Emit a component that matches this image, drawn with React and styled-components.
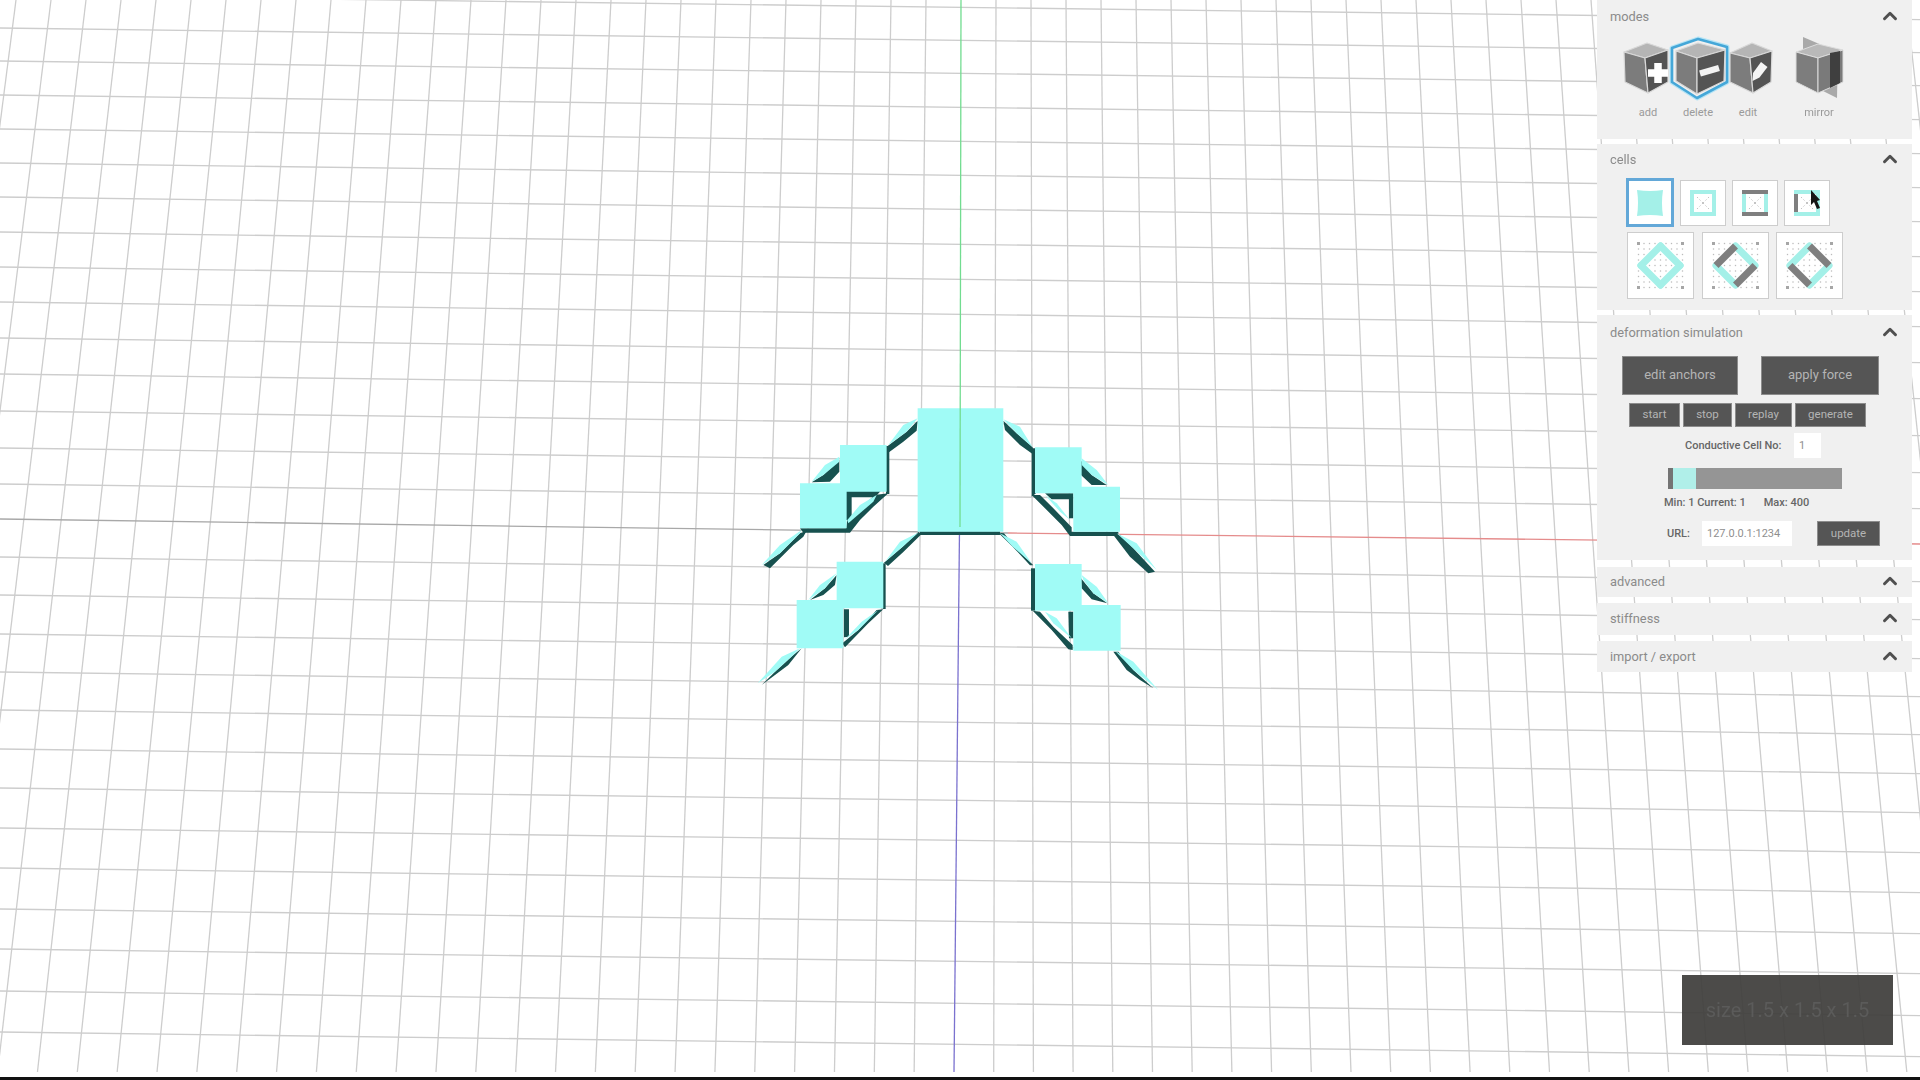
import React from "react";
import styled, { createGlobalStyle } from "styled-components";
import { ChevronUp } from "lucide-react";

const AQUA = "#a0fbf6";
const DARK = "#17514f";
const GREY = "#7f7f7f";
const TINT = "#a4f0e8";

const GlobalStyle = createGlobalStyle`
    html, body {
        margin: 0;
        padding: 0;
        background: #fff;
    }
    body {
        font-family: Roboto, "Liberation Sans", sans-serif;
        overflow: hidden;
    }
`;

const Stage = styled.div`
    position: relative;
    width: 1920px;
    height: 1080px;
    display: flex;
    flex-direction: column;
    overflow: hidden;
    background: #fff;
`;

const Viewport = styled.svg`
    display: block;
    flex: 1;
    width: 1920px;
    filter: blur(0.5px);
`;

const BottomBar = styled.div`
    height: 3px;
    background: #121212;
`;

const Panel = styled.div`
    position: absolute;
    top: 0;
    left: 1597px;
    width: 315px;
    display: flex;
    flex-direction: column;
    gap: 5px;
    filter: blur(0.45px);
`;

const Section = styled.section`
    background: #f0f0f0;
    margin-top: ${(p) => p.$top || 0}px;
    padding-bottom: ${(p) => p.$pad || 0}px;
`;

const Header = styled.header`
    display: flex;
    align-items: center;
    justify-content: space-between;
    height: ${(p) => p.$height || 30}px;
    padding: 0 11px 0 13px;
    font-size: 12.8px;
    color: #8b8b8b;
`;

const Chevron = styled(ChevronUp)`
    color: #4f4f4f;
`;

const ModeRow = styled.div`
    display: flex;
    margin: 6px 0 0 26px;
`;

const ModeItem = styled.div`
    display: flex;
    flex-direction: column;
    align-items: center;
    width: 50px;
    margin-left: ${(p) => p.$gap || 0}px;
    font-size: 11px;
    line-height: 14px;
    color: #9a9a9a;
`;

const ModeIcon = styled.svg`
    display: block;
    overflow: visible;
    margin-bottom: 8px;
`;

const CellRow = styled.div`
    display: flex;
    align-items: center;
    gap: ${(p) => p.$gap}px;
    margin: ${(p) => p.$top}px 0 0 ${(p) => p.$left}px;
`;

const CellBox = styled.div`
    position: relative;
    flex: none;
    box-sizing: border-box;
    width: ${(p) => (p.$selected ? 48 : p.$size)}px;
    height: ${(p) => (p.$selected ? 49 : p.$size)}px;
    display: flex;
    align-items: center;
    justify-content: center;
    background: #fff;
    border: ${(p) => (p.$selected ? "3px solid #63a8d8" : "1px solid #cdcdcd")};
`;

const Pointer = styled.svg`
    position: absolute;
    top: 9px;
    left: 26px;
`;

const ButtonRow = styled.div`
    display: flex;
    gap: ${(p) => p.$gap}px;
    margin: ${(p) => p.$top}px 0 0 ${(p) => p.$left}px;
`;

const DarkButton = styled.button`
    box-sizing: border-box;
    width: ${(p) => p.$width}px;
    height: ${(p) => p.$height}px;
    padding: 0 0 2px;
    border: 1px solid #8c8c8c;
    background: #555;
    color: #b4b4b4;
    font-family: inherit;
    font-size: ${(p) => p.$font}px;
`;

const FieldRow = styled.div`
    display: flex;
    align-items: center;
    margin: ${(p) => p.$top}px 0 0 ${(p) => p.$left}px;
`;

const FieldLabel = styled.label`
    width: ${(p) => p.$width}px;
    font-size: 11px;
    font-weight: 500;
    color: #666;
    white-space: nowrap;
`;

const TextInput = styled.input`
    box-sizing: border-box;
    width: ${(p) => p.$width}px;
    height: 25px;
    padding: 0 0 0 5px;
    border: 0;
    outline: 0;
    background: #fff;
    color: #8f8f8f;
    font-family: inherit;
    font-size: 11px;
`;

const Slider = styled.div`
    display: flex;
    width: 174px;
    height: 21px;
    margin: 10px 0 0 71px;
    background: #959595;
`;

const SliderStart = styled.div`
    width: 5px;
    background: #747474;
`;

const SliderThumb = styled.div`
    width: 23px;
    background: #b0efe9;
`;

const RangeRow = styled.div`
    display: flex;
    gap: 18px;
    margin: 7px 0 0 67px;
    font-size: 11px;
    font-weight: 500;
    line-height: 14px;
    color: #666;
`;

const SizeBadge = styled.div`
    position: absolute;
    left: 1682px;
    top: 975px;
    width: 211px;
    height: 70px;
    display: flex;
    align-items: center;
    justify-content: center;
    background: rgba(62, 61, 59, 0.93);
    color: #5b5b5a;
    font-size: 20px;
    filter: blur(0.5px);
`;

// grid lines, measured from the reference
const ROWS = [-5, 28, 61, 95, 129, 163, 197, 232, 267, 302, 338, 374, 411, 448, 484, 557, 595, 634, 672, 710, 749, 788, 828, 868, 909, 949, 991, 1032];
const COLS = Array.from({ length: 60 }, (_, i) => i - 29).filter((k) => k !== 0);

function Grid() {
    return (
        <g stroke="#cdcdcd" strokeWidth="1.3">
            {ROWS.map((y) => (
                <line key={y} x1="0" y1={y} x2="1920" y2={y + 24.6} />
            ))}
            {COLS.map((k) => (
                <line key={k} x1={961 + 35 * k} y1="0" x2={954 + (k < 0 ? 39.85 : 39.7) * k} y2="1072" />
            ))}
        </g>
    );
}

function Axes() {
    return (
        <g strokeWidth="1.3">
            <line x1="0" y1="519" x2="1008" y2="533" stroke="#a8a8a8" />
            <line x1="1008" y1="533" x2="1920" y2="544" stroke="#e58c8c" />
            <line x1="959.5" y1="530" x2="954" y2="1072" stroke="#7b72cf" />
        </g>
    );
}

// each group is traced at 3x from a crop whose corner is at x, y
const STRUCTURE = [
    {
        x: 740,
        y: 390,
        dark: [
            "540,424 780,424 780,435 540,435",
            "533,92 530,122 490,155 447,187 440,170 500,125",
            "790,92 830,130 878,172 882,195 840,165 795,120",
            "535,426 545,432 490,486 444,528 432,518 488,470",
            "775,428 792,430 834,480 880,526 870,526 818,470",
        ],
        aqua: [
            "533,55 790,55 790,425 533,425",
            "533,85 490,105 445,165 500,125",
            "790,88 840,110 878,172 830,130",
            "535,428 480,455 435,515 488,470",
            "780,430 830,455 875,520 818,470",
        ],
    },
    {
        x: 760,
        y: 440,
        dark: [
            "238,60 238,95 210,125 155,127 190,105",
            "378,18 388,18 388,162 378,162",
            "258,153 362,153 345,172 275,172 275,240 258,240",
            "385,160 340,200 300,240 270,278 130,278 120,265 258,265 262,240 300,205 345,165",
            "140,272 130,290 100,315 30,385 10,375 60,340 120,280",
        ],
        aqua: [
            "240,15 380,15 380,155 260,155 260,265 120,265 120,130 240,130",
            "238,50 195,75 155,125 190,105 238,65",
            "350,165 300,195 262,240 265,250 340,185",
            "125,270 60,315 5,375 60,340 120,280",
        ],
    },
    {
        x: 1020,
        y: 440,
        dark: [
            "35,25 48,25 48,160 35,170",
            "183,62 183,105 215,135 260,135 215,105",
            "75,160 160,160 160,235 147,235 147,178 95,178",
            "35,165 60,165 100,205 155,262 155,275 295,275 295,288 150,288 125,255 75,205",
            "280,285 300,285 340,325 405,395 385,400 330,350",
        ],
        aqua: [
            "45,22 185,22 185,140 300,140 300,275 160,275 160,160 45,160",
            "185,55 230,90 265,135 215,105 185,75",
            "75,165 110,190 150,240 120,215",
            "290,280 350,310 410,390 340,325",
        ],
    },
    {
        x: 755,
        y: 560,
        dark: [
            "245,45 240,75 205,105 165,120 210,85",
            "383,10 392,10 392,147 383,147",
            "267,148 282,148 282,230 267,232",
            "385,148 340,190 270,262 262,250 310,210 365,150",
            "140,265 100,315 20,375 60,335 115,285",
        ],
        aqua: [
            "245,5 385,5 385,145 265,145 265,265 125,265 125,120 245,120",
            "245,40 195,75 160,120 210,85",
            "370,150 320,185 268,240 310,210",
            "135,265 80,290 8,370 60,335 115,285",
        ],
    },
    {
        x: 1020,
        y: 560,
        dark: [
            "33,25 47,25 47,152 33,152",
            "183,55 185,85 215,118 262,130 220,100",
            "145,155 160,155 160,235 147,235",
            "38,152 60,155 100,200 158,255 158,270 145,268 95,210",
            "280,275 295,275 340,330 400,385 360,360 320,330",
        ],
        aqua: [
            "45,12 185,12 185,135 302,135 302,272 160,272 160,152 45,152",
            "185,45 230,80 265,130 220,100 190,60",
            "75,155 110,175 155,235 100,190",
            "285,272 340,305 415,390 340,330",
        ],
    },
];

function Structure() {
    return (
        <g>
            {STRUCTURE.map((group) => (
                <g key={`${group.x}-${group.y}`} transform={`translate(${group.x} ${group.y}) scale(0.3333)`}>
                    {group.dark.map((points) => (
                        <polygon key={points} points={points} fill={DARK} />
                    ))}
                    {group.aqua.map((points) => (
                        <polygon key={points} points={points} fill={AQUA} />
                    ))}
                </g>
            ))}
        </g>
    );
}

function Cube({ lt, top, rt, rb, bot, lb, mid }) {
    const pts = (...list) => list.map((p) => p.join(",")).join(" ");
    return (
        <g stroke="#d8d8d8" strokeWidth="1.2" strokeLinejoin="round">
            <polygon points={pts(lt, top, rt, mid)} fill="#b5b5b5" />
            <polygon points={pts(lt, mid, bot, lb)} fill="#7c7c7c" />
            <polygon points={pts(mid, rt, rb, bot)} fill="#545454" />
        </g>
    );
}

function AddIcon() {
    return (
        <ModeIcon width="50" height="60" viewBox="0 0 50 60">
            <Cube lt={[1, 14]} top={[24, 5]} rt={[45, 12]} rb={[45, 44]} bot={[25, 55]} lb={[2, 44]} mid={[22, 20]} />
            <path d="M35 25v20M25 35h20" stroke="#fff" strokeWidth="7.5" />
        </ModeIcon>
    );
}

function DeleteIcon() {
    return (
        <ModeIcon width="50" height="60" viewBox="0 0 50 60">
            <polygon points="25,1 -1,10 -1,44 24,60 54,44 54,9" fill="none" stroke="#b5e4f5" strokeWidth="5" strokeLinejoin="round" />
            <polygon points="25,1 -1,10 -1,44 24,60 54,44 54,9" fill="#f0f0f0" stroke="#45a7d8" strokeWidth="2.6" strokeLinejoin="round" />
            <Cube lt={[3, 13]} top={[25, 5]} rt={[52, 12]} rb={[51, 43]} bot={[24, 56]} lb={[3, 43]} mid={[24, 20]} />
            <path d="M27 35.500l19-5.500" stroke="#f2f2f2" strokeWidth="6.5" />
        </ModeIcon>
    );
}

function EditIcon() {
    return (
        <ModeIcon width="50" height="60" viewBox="0 0 50 60">
            <Cube lt={[7, 15]} top={[29, 5]} rt={[49, 13]} rb={[48, 44]} bot={[30, 55]} lb={[7, 44]} mid={[27, 20]} />
            <polygon points="38,24 44.500,29 36.500,39.500 29.500,43 30,35" fill="#f5f5f5" />
        </ModeIcon>
    );
}

function MirrorIcon() {
    return (
        <ModeIcon width="50" height="60" viewBox="0 0 50 60">
            <polygon points="9,-1 44,14 43,60 9,43" fill="#a9a9a9" />
            <polygon points="2,14 24,6 49,12 24,20" fill="#b9b9b9" stroke="#ddd" strokeWidth="1" />
            <polygon points="2,14 24,20 24,55 2,44" fill="#7d7d7d" stroke="#ddd" strokeWidth="1" />
            <polygon points="24,20 49,12 49,44 24,55" fill="#7a7a7a" stroke="#ddd" strokeWidth="1" />
            <polygon points="36,15 46,13 46,45 36,50" fill="#3f3f3f" />
        </ModeIcon>
    );
}

function DotGrid({ center, reach, steps }) {
    const marks = [];
    const step = (reach * 2) / steps;
    for (let i = 0; i <= steps; i++) {
        for (let j = 0; j <= steps; j++) {
            const corner = (i === 0 || i === steps) && (j === 0 || j === steps);
            const size = corner ? 3 : 1.3;
            marks.push(
                <rect
                    key={`${i}-${j}`}
                    x={center - reach + i * step - size / 2}
                    y={center - reach + j * step - size / 2}
                    width={size}
                    height={size}
                    fill={corner ? "#a6a6a6" : "#bcbcbc"}
                />
            );
        }
    }
    return <g>{marks}</g>;
}

// edges are top, right, bottom, left
function SquareCell({ edges, filled }) {
    const [t, r, b, l] = edges;
    return (
        <svg width="40" height="40" viewBox="0 0 40 40">
            {filled ? (
                <path d="M7 7Q20 9 33 7Q31 20 33 33Q20 31 7 33Q9 20 7 7z" fill={TINT} />
            ) : (
                <g strokeWidth="4" fill="none">
                    <line x1="20" y1="20" x2="14" y2="14" stroke="#c4c4c4" strokeWidth="1" strokeDasharray="1.500 2" />
                    <line x1="20" y1="20" x2="26" y2="14" stroke="#c4c4c4" strokeWidth="1" strokeDasharray="1.500 2" />
                    <line x1="20" y1="20" x2="14" y2="26" stroke="#c4c4c4" strokeWidth="1" strokeDasharray="1.500 2" />
                    <line x1="20" y1="20" x2="26" y2="26" stroke="#c4c4c4" strokeWidth="1" strokeDasharray="1.500 2" />
                    <line x1="31" y1="7" x2="31" y2="33" stroke={r} />
                    <line x1="9" y1="7" x2="9" y2="33" stroke={l} />
                    <line x1="7" y1="9" x2="33" y2="9" stroke={t} />
                    <line x1="7" y1="31" x2="33" y2="31" stroke={b} />
                </g>
            )}
        </svg>
    );
}

// edges are top-left, top-right, bottom-right, bottom-left; grey ones sit on top
function DiamondCell({ edges }) {
    const lines = [
        { a: [32.5, 13], b: [13, 32.5] },
        { a: [32.5, 13], b: [52, 32.5] },
        { a: [32.5, 52], b: [52, 32.5] },
        { a: [32.5, 52], b: [13, 32.5] },
    ].map((line, i) => ({ ...line, color: edges[i] }));
    const ordered = [...lines.filter((l) => l.color === TINT), ...lines.filter((l) => l.color !== TINT)];
    return (
        <svg width="65" height="65" viewBox="0 0 65 65">
            <DotGrid center={32.5} reach={22} steps={8} />
            <g strokeWidth="7">
                {ordered.map((l, i) => (
                    <line key={i} x1={l.a[0]} y1={l.a[1]} x2={l.b[0]} y2={l.b[1]} stroke={l.color} strokeLinecap={l.color === TINT ? "round" : "butt"} />
                ))}
            </g>
        </svg>
    );
}

function Head({ title, height }) {
    return (
        <Header $height={height}>
            {title}
            <Chevron size={22} strokeWidth={3.2} />
        </Header>
    );
}

export default function App() {
    return (
        <Stage>
            <GlobalStyle />
            <Viewport viewBox="0 0 1920 1077" height="1077">
                <Grid />
                <Axes />
                <Structure />
                <line x1="961" y1="0" x2="960" y2="527" stroke="#72dc90" strokeWidth="1.3" />
            </Viewport>
            <BottomBar />

            <Panel>
                <Section $pad={19}>
                    <Head title="modes" height={32} />
                    <ModeRow>
                        <ModeItem><AddIcon />add</ModeItem>
                        <ModeItem><DeleteIcon />delete</ModeItem>
                        <ModeItem><EditIcon />edit</ModeItem>
                        <ModeItem $gap={21}><MirrorIcon />mirror</ModeItem>
                    </ModeRow>
                </Section>

                <Section $pad={11}>
                    <Head title="cells" />
                    <CellRow $gap={6} $top={4} $left={29}>
                        <CellBox $selected>
                            <SquareCell filled edges={[]} />
                        </CellBox>
                        <CellBox $size={46}>
                            <SquareCell edges={[TINT, TINT, TINT, TINT]} />
                        </CellBox>
                        <CellBox $size={46}>
                            <SquareCell edges={[GREY, TINT, GREY, TINT]} />
                        </CellBox>
                        <CellBox $size={46}>
                            <SquareCell edges={[TINT, TINT, TINT, GREY]} />
                            <Pointer width="10" height="19" viewBox="0 0 10 19">
                                <path d="M0 0l9 10-3 1 3 7-3 1-3-7-3 3z" fill="#161616" />
                            </Pointer>
                        </CellBox>
                    </CellRow>
                    <CellRow $gap={7.5} $top={5} $left={30}>
                        <CellBox $size={67}>
                            <DiamondCell edges={[TINT, TINT, TINT, TINT]} />
                        </CellBox>
                        <CellBox $size={67}>
                            <DiamondCell edges={[GREY, TINT, GREY, TINT]} />
                        </CellBox>
                        <CellBox $size={67}>
                            <DiamondCell edges={[TINT, GREY, TINT, GREY]} />
                        </CellBox>
                    </CellRow>
                </Section>

                <Section $pad={14}>
                    <Head title="deformation simulation" height={34} />
                    <ButtonRow $gap={23} $top={7} $left={25}>
                        <DarkButton $width={116} $height={39} $font={13}>edit anchors</DarkButton>
                        <DarkButton $width={118} $height={39} $font={13}>apply force</DarkButton>
                    </ButtonRow>
                    <ButtonRow $gap={3} $top={8} $left={32}>
                        <DarkButton $width={51} $height={24} $font={11.5}>start</DarkButton>
                        <DarkButton $width={49} $height={24} $font={11.5}>stop</DarkButton>
                        <DarkButton $width={57} $height={24} $font={11.5}>replay</DarkButton>
                        <DarkButton $width={71} $height={24} $font={11.5}>generate</DarkButton>
                    </ButtonRow>
                    <FieldRow $top={6} $left={88}>
                        <FieldLabel $width={109}>Conductive Cell No:</FieldLabel>
                        <TextInput $width={27} defaultValue="1" />
                    </FieldRow>
                    <Slider>
                        <SliderStart />
                        <SliderThumb />
                    </Slider>
                    <RangeRow>
                        <span>Min: 1 Current: 1</span>
                        <span>Max: 400</span>
                    </RangeRow>
                    <FieldRow $top={11} $left={70}>
                        <FieldLabel $width={35}>URL:</FieldLabel>
                        <TextInput $width={90} defaultValue="127.0.0.1:1234" />
                        <ButtonRow $gap={0} $top={0} $left={25}>
                            <DarkButton $width={63} $height={25} $font={11.5}>update</DarkButton>
                        </ButtonRow>
                    </FieldRow>
                </Section>

                <Section $top={2} $pad={2}>
                    <Head title="advanced" height={28} />
                </Section>
                <Section $top={1} $pad={2}>
                    <Head title="stiffness" />
                </Section>
                <Section $top={1} $pad={1}>
                    <Head title="import / export" />
                </Section>
            </Panel>

            <SizeBadge>size 1.5 x 1.5 x 1.5</SizeBadge>
        </Stage>
    );
}
